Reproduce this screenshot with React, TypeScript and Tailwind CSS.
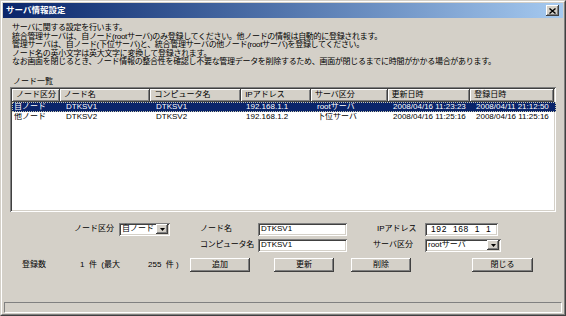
import { useState } from "react";

const font = "font-['Liberation_Sans','Noto_Sans_CJK_JP',sans-serif]";

const raised =
  "bg-[#d4d0c8] shadow-[inset_-1px_-1px_#404040,inset_1px_1px_#ffffff,inset_-2px_-2px_#808080,inset_2px_2px_#d4d0c8]";
const sunken =
  "bg-white shadow-[inset_1px_1px_#808080,inset_-1px_-1px_#ffffff,inset_2px_2px_#404040,inset_-2px_-2px_#d4d0c8]";

const columns = [
  { label: "ノード区分", w: "w-[48px]", pad: "pl-[2px]" },
  { label: "ノード名", w: "w-[91px]", pad: "pl-[6px]" },
  { label: "コンピュータ名", w: "w-[91px]", pad: "pl-[5px]" },
  { label: "IPアドレス", w: "w-[70px]", pad: "pl-[4px]" },
  { label: "サーバ区分", w: "w-[77px]", pad: "pl-[5px]" },
  { label: "更新日時", w: "w-[83px]", pad: "pl-[4px]" },
  { label: "登録日時", w: "w-[84px]", pad: "pl-[4px]" },
];

const rows = [
  ["自ノード", "DTKSV1", "DTKSV1", "192.168.1.1", "rootサーバ", "2008/04/16 11:23:23", "2008/04/11 21:12:50"],
  ["他ノード", "DTKSV2", "DTKSV2", "192.168.1.2", "下位サーバ", "2008/04/16 11:25:16", "2008/04/16 11:25:16"],
];

function Arrow() {
  return (
    <div className={`${raised} w-[12px] h-[10px] flex items-center justify-center`}>
      <svg width="5" height="3" viewBox="0 0 5 3">
        <path d="M0 0h5L2.5 3z" fill="#000" />
      </svg>
    </div>
  );
}

function Select({ value, w }: { value: string; w: string }) {
  return (
    <div className={`${sunken} ${w} h-[13px] flex items-center justify-between pl-[3px] pr-[2px]`}>
      <span className="leading-none">{value}</span>
      <Arrow />
    </div>
  );
}

function Input({ value, w, className = "" }: { value: string; w: string; className?: string }) {
  return (
    <div className={`${sunken} ${w} h-[13px] flex items-center pl-[3px] ${className}`}>
      <span className="leading-none">{value}</span>
    </div>
  );
}

function Button({ label, w = "w-[60px]" }: { label: string; w?: string }) {
  return (
    <button className={`${raised} ${w} h-[14px] flex items-center justify-center leading-none`}>
      {label}
    </button>
  );
}

export default function App() {
  const [selected, setSelected] = useState(0);

  return (
    <div className={`${font} w-[566px] h-[316px] text-[8px] text-black bg-[#d4d0c8] border border-t-[#d4d0c8] border-l-[#d4d0c8] border-r-[#404040] border-b-[#404040]`}>
      <div className="h-full flex flex-col border border-t-white border-l-white border-r-[#808080] border-b-[#808080]">
        {/* title bar */}
        <div className="h-[15px] mx-[1px] mt-[1px] flex items-center justify-between px-[3px] bg-gradient-to-r from-[#0a246a] to-[#a6caf0]">
          <span className="text-white font-bold text-[8.5px] leading-none">サーバ情報設定</span>
          <div className={`${raised} w-[13px] h-[11px] flex items-center justify-center mr-[1px]`}>
            <svg width="7" height="6" viewBox="0 0 7 6">
              <path d="M0.5 0.5l6 5M6.5 0.5l-6 5" stroke="#000" strokeWidth="1.4" />
            </svg>
          </div>
        </div>

        {/* description */}
        <div className="pl-[10px] pt-[6px] leading-[8.5px] tracking-[-0.3px]">
          <p>サーバに関する設定を行います。</p>
          <p>統合管理サーバは、自ノード(rootサーバ)のみ登録してください。他ノードの情報は自動的に登録されます。</p>
          <p>管理サーバは、自ノード(下位サーバ)と、統合管理サーバの他ノード(rootサーバ)を登録してください。</p>
          <p>ノード名の英小文字は英大文字に変換して登録されます。</p>
          <p>なお画面を閉じるとき、ノード情報の整合性を確認し不要な管理データを削除するため、画面が閉じるまでに時間がかかる場合があります。</p>
        </div>

        <div className="pl-[11px] mt-[10px] leading-[9px]">ノード一覧</div>

        {/* list view */}
        <div className={`${sunken} mx-[8px] mt-[1px] h-[125px] p-[2px]`}>
          <div className="flex">
            {columns.map((c) => (
              <div key={c.label} className={`${raised} ${c.w} h-[13px] flex items-center pl-[4px] leading-none`}>
                {c.label}
              </div>
            ))}
          </div>
          {rows.map((r, i) => (
            <div
              key={i}
              onClick={() => setSelected(i)}
              className={`flex h-[10px] items-center leading-none cursor-default w-[544px] ${
                selected === i ? "bg-[#0a246a] text-white outline outline-1 outline-dotted outline-[#c8c8b0] -outline-offset-1" : ""
              }`}
            >
              {r.map((cell, j) => (
                <div key={j} className={`${columns[j].w} ${columns[j].pad} whitespace-nowrap overflow-hidden`}>
                  {cell}
                </div>
              ))}
            </div>
          ))}
        </div>

        {/* form */}
        <div className="mt-[11px] flex">
          <div className="w-[72px]" />
          <div className="flex items-start">
            <div className="flex items-center gap-[5px] h-[13px]">
              <span>ノード区分</span>
              <Select value="自ノード" w="w-[51px]" />
            </div>
            <div className="ml-[30px] flex flex-col gap-[3px]">
              <div className="flex items-center h-[13px]">
                <span className="w-[58px]">ノード名</span>
                <Input value="DTKSV1" w="w-[89px]" />
              </div>
              <div className="flex items-center h-[13px]">
                <span className="w-[58px] tracking-[-0.3px]">コンピュータ名</span>
                <Input value="DTKSV1" w="w-[89px]" />
              </div>
            </div>
            <div className="ml-[26px] flex flex-col gap-[3px]">
              <div className="flex items-center h-[13px]">
                <span className="w-[52px] pl-[4px]">IPアドレス</span>
                <Input value="192  168  1  1" w="w-[73px]" className="pl-[6px] text-[8.5px] tracking-[0.6px] whitespace-pre" />
              </div>
              <div className="flex items-center h-[13px]">
                <span className="w-[52px]">サーバ区分</span>
                <Select value="rootサーバ" w="w-[76px]" />
              </div>
            </div>
          </div>
        </div>

        {/* count + buttons */}
        <div className="mt-[6px] flex items-center h-[14px]">
          <span className="ml-[20px] w-[58px]">登録数</span>
          <span className="w-[68px]">1&nbsp;&nbsp;件&nbsp;&nbsp;(最大</span>
          <span className="w-[42px]">255&nbsp;&nbsp;件&nbsp;)</span>
          <Button label="追加" />
          <div className="ml-[24px]"><Button label="更新" /></div>
          <div className="ml-[17px]"><Button label="削除" /></div>
          <div className="ml-[61px]"><Button label="閉じる" w="w-[61px]" /></div>
        </div>

        {/* status bar */}
        <div className="mt-auto mb-[1px] mx-[2px] h-[11px] border border-t-[#808080] border-l-[#808080] border-r-white border-b-white" />
      </div>
    </div>
  );
}
